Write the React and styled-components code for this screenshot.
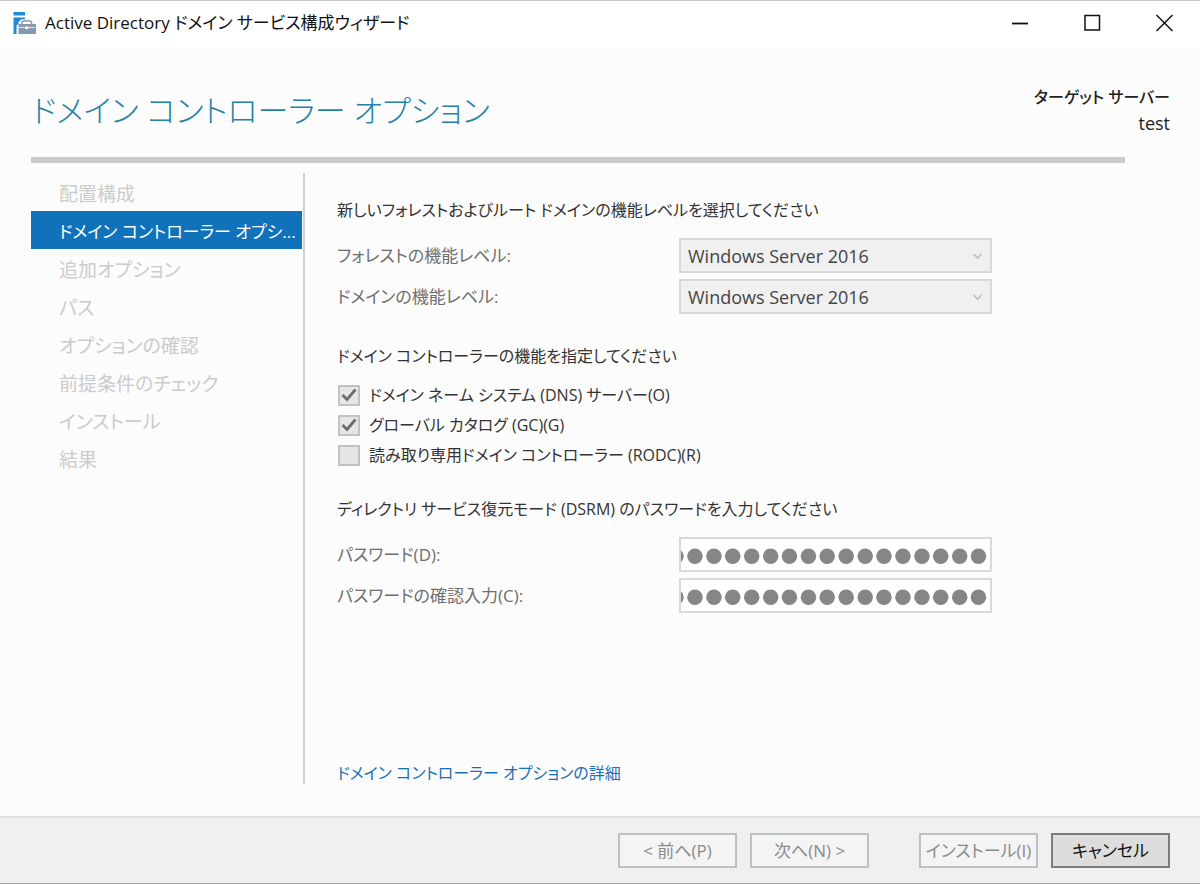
import React, { useState } from 'react';
import styled, { createGlobalStyle } from 'styled-components';

const GlobalStyle = createGlobalStyle`
  * {
    box-sizing: border-box;
  }

  body {
    margin: 0;
    background: #fcfcfc;
    color: #333;
    font-family: 'Open Sans', 'Noto Sans CJK JP', sans-serif;
    font-size: 16px;
    line-height: 26px;
    font-feature-settings: 'palt';
  }

  button, input, select {
    font: inherit;
    font-feature-settings: inherit;
    margin: 0;
  }
`;

const Window = styled.div`
  display: flex;
  flex-direction: column;
  min-height: 100vh;
  border-top: 1px solid #c8c8c8;
  border-bottom: 1px solid #a8a8a8;
`;

const TitleBar = styled.header`
  display: flex;
  align-items: center;
  height: 47px;
  padding: 0 0 4px 12px;
  background: #fff;
  color: #111;
`;

const TitleText = styled.span`
  flex: 1;
  margin-left: 9px;
  font-size: 17px;
  white-space: nowrap;
`;

const CaptionButton = styled.button`
  display: flex;
  align-items: center;
  justify-content: center;
  width: 72px;
  height: 40px;
  padding: 0;
  border: none;
  background: transparent;
  color: #111;
`;

const Header = styled.div`
  display: flex;
  justify-content: space-between;
  align-items: center;
  height: 109px;
  padding: 14px 30px 0 32px;
`;

const PageTitle = styled.h1`
  margin: 0;
  color: #2482a4;
  font-size: 31px;
  line-height: 48px;
  font-weight: 300;
`;

const Target = styled.div`
  color: #222;
  font-weight: 500;
  text-align: right;
`;

const ServerName = styled.div`
  font-size: 18px;
`;

const Rule = styled.div`
  height: 6px;
  margin: 0 75px 0 31px;
  background: #cacaca;
`;

const Body = styled.div`
  display: flex;
  flex: 1;
  padding: 10px 30px 32px 31px;
`;

const Sidebar = styled.nav`
  width: 274px;
  padding-right: 1px;
  border-right: 2px solid #d0d0d0;
`;

const Step = styled.div`
  height: 38px;
  padding: 4px 4px 0 28px;
  background: ${({ $active }) => ($active ? '#1072ba' : 'transparent')};
  color: ${({ $active }) => ($active ? '#fff' : '#cbcbcb')};
  font-size: ${({ $active }) => ($active ? '17px' : '19px')};
  line-height: 34px;
  white-space: nowrap;
`;

const Content = styled.main`
  display: flex;
  flex: 1;
  flex-direction: column;
  align-items: flex-start;
  padding: 24px 0 0 32px;
`;

const Section = styled.section`
  width: 100%;
  max-width: 655px;
  margin-bottom: 23px;
`;

const SectionTitle = styled.h2`
  margin: 0 0 11px;
  font-size: inherit;
  font-weight: 400;
`;

const FieldList = styled.div`
  padding-top: 4px;
`;

const CheckList = styled.div`
  padding-bottom: 3px;
`;

const Field = styled.div`
  display: flex;
  align-items: center;
  justify-content: space-between;
  margin-bottom: 6px;
`;

const FieldLabel = styled.label`
  color: #6f6f6f;
  font-size: 17px;
`;

const SelectBox = styled.div`
  display: grid;
  width: 313px;
  align-items: center;

  > * {
    grid-area: 1 / 1;
  }

  svg {
    justify-self: end;
    margin-right: 9px;
    pointer-events: none;
  }
`;

const Select = styled.select`
  width: 100%;
  height: 35px;
  padding: 0 28px 0 7px;
  border: 2px solid #d9d9d9;
  border-radius: 0;
  background: #f0f0f0;
  color: #444;
  font-size: 18px;
  opacity: 1;
  appearance: none;
`;

const PasswordInput = styled.input`
  width: 313px;
  height: 35px;
  padding: 0 2px 0 0;
  border: 2px solid #d7dadc;
  background: #fff;
  color: #868686;
  font-family: 'Liberation Sans', sans-serif;
  font-size: 54px;
  font-weight: 700;
  line-height: 31px;
  /* keeps the end of a long value in view */
  direction: rtl;
`;

const CheckRow = styled.label`
  display: flex;
  align-items: center;
  gap: 9px;
  height: 30px;
  padding-left: 1px;
`;

const CheckBox = styled.span`
  display: grid;
  place-items: center;

  > * {
    grid-area: 1 / 1;
  }

  svg {
    pointer-events: none;
  }
`;

const CheckInput = styled.input`
  width: 22px;
  height: 21px;
  border: 2px solid #c2c2c2;
  background: #e6e6e6;
  appearance: none;
`;

const MoreLink = styled.a`
  margin-top: auto;
  margin-bottom: -2px;
  color: #1a70b8;
  text-decoration: none;
`;

const Footer = styled.footer`
  display: flex;
  justify-content: flex-end;
  gap: 13px;
  padding: 15px 30px;
  border-top: 2px solid #dfdfdf;
  background: #f0f0f0;
`;

const FooterButton = styled.button`
  width: 119px;
  height: 35px;
  margin-left: ${({ $apart }) => ($apart ? '37px' : 0)};
  padding: 0;
  border: 2px solid #bcc1c4;
  background: #f4f4f4;
  color: #8b8b8b;
  font-size: 17px;
  white-space: nowrap;

  &:enabled {
    border-color: #7c7c7c;
    background: #dddddd;
    color: #111;
  }
`;

const steps = [
  '配置構成',
  'ドメイン コントローラー オプシ...',
  '追加オプション',
  'パス',
  'オプションの確認',
  '前提条件のチェック',
  'インストール',
  '結果',
];

const levels = [
  { id: 'forest', label: 'フォレストの機能レベル:' },
  { id: 'domain', label: 'ドメインの機能レベル:' },
];

const features = [
  { id: 'dns', label: 'ドメイン ネーム システム (DNS) サーバー(O)', checked: true },
  { id: 'gc', label: 'グローバル カタログ (GC)(G)', checked: true },
  { id: 'rodc', label: '読み取り専用ドメイン コントローラー (RODC)(R)', checked: false },
];

const AppIcon = () => (
  <svg width="24" height="24" viewBox="0 0 24 24" aria-hidden="true">
    <path d="M1.500 1H13v3.500H1.500zM1.500 6.500H13v1.700H9.500L6.500 11v2l-2 1.500v8.500h-3z" fill="#1f8ad8" />
    <path d="M10 13.500v-2q0-1.500 1.500-1.500h6.500q1.500 0 1.500 1.500v2" fill="none" stroke="#8799ae" strokeWidth="1.500" />
    <path d="M6.500 13H24v10H6.500z" fill="#8799ae" />
    <path d="M7 16.500h5.500M17 16.500h6.500" stroke="#dfe5ec" strokeWidth="1" />
    <path d="M13 15.500h3.500v2.500H13z" fill="#fff" />
  </svg>
);

const Check = () => (
  <svg width="18" height="16" viewBox="0 0 18 16" aria-hidden="true">
    <path d="M2.500 8l4.500 4.500L15.500 2.500" fill="none" stroke="#6d6d6d" strokeWidth="2.800" />
  </svg>
);

const App = () => {
  const [passwords, setPasswords] = useState({ password: 'x'.repeat(20), confirm: 'x'.repeat(20) });

  const handleChange = (e) => {
    setPasswords({ ...passwords, [e.target.id]: e.target.value });
  };

  return (
    <>
      <GlobalStyle />
      <Window>
        <TitleBar>
          <AppIcon />
          <TitleText>Active Directory ドメイン サービス構成ウィザード</TitleText>
          <CaptionButton aria-label="最小化">
            <svg width="18" height="18" viewBox="0 0 18 18">
              <path d="M1 9.500h16" stroke="currentColor" strokeWidth="1.800" />
            </svg>
          </CaptionButton>
          <CaptionButton aria-label="最大化">
            <svg width="18" height="18" viewBox="0 0 18 18">
              <path d="M2 1.500h14.500V16H2z" fill="none" stroke="currentColor" strokeWidth="1.500" />
            </svg>
          </CaptionButton>
          <CaptionButton aria-label="閉じる">
            <svg width="18" height="18" viewBox="0 0 18 18">
              <path d="M1.500 1l16 16M17.500 1L1.500 17" stroke="currentColor" strokeWidth="1.500" />
            </svg>
          </CaptionButton>
        </TitleBar>

        <Header>
          <PageTitle>ドメイン コントローラー オプション</PageTitle>
          <Target>
            <div>ターゲット サーバー</div>
            <ServerName>test</ServerName>
          </Target>
        </Header>
        <Rule />

        <Body>
          <Sidebar>
            {steps.map((step, i) => (
              <Step key={step} $active={i === 1}>{step}</Step>
            ))}
          </Sidebar>

          <Content>
            <Section>
              <SectionTitle>新しいフォレストおよびルート ドメインの機能レベルを選択してください</SectionTitle>
              <FieldList>
                {levels.map(({ id, label }) => (
                  <Field key={id}>
                    <FieldLabel htmlFor={id}>{label}</FieldLabel>
                    <SelectBox>
                      <Select id={id} disabled>
                        <option>Windows Server 2016</option>
                      </Select>
                      <svg width="11" height="8" viewBox="0 0 11 8" aria-hidden="true">
                        <path d="M1.500 2l4 4 4-4" fill="none" stroke="#bfbfbf" strokeWidth="1.600" />
                      </svg>
                    </SelectBox>
                  </Field>
                ))}
              </FieldList>
            </Section>

            <Section>
              <SectionTitle>ドメイン コントローラーの機能を指定してください</SectionTitle>
              <CheckList>
                {features.map(({ id, label, checked }) => (
                  <CheckRow key={id}>
                    <CheckBox>
                      <CheckInput type="checkbox" defaultChecked={checked} disabled />
                      {checked && <Check />}
                    </CheckBox>
                    {label}
                  </CheckRow>
                ))}
              </CheckList>
            </Section>

            <Section>
              <SectionTitle>ディレクトリ サービス復元モード (DSRM) のパスワードを入力してください</SectionTitle>
              <FieldList>
                <Field>
                  <FieldLabel htmlFor="password">パスワード(D):</FieldLabel>
                  <PasswordInput id="password" type="password" value={passwords.password} onChange={handleChange} />
                </Field>
                <Field>
                  <FieldLabel htmlFor="confirm">パスワードの確認入力(C):</FieldLabel>
                  <PasswordInput id="confirm" type="password" value={passwords.confirm} onChange={handleChange} />
                </Field>
              </FieldList>
            </Section>

            <MoreLink href="#more">ドメイン コントローラー オプションの詳細</MoreLink>
          </Content>
        </Body>

        <Footer>
          <FooterButton disabled>&lt; 前へ(P)</FooterButton>
          <FooterButton disabled>次へ(N) &gt;</FooterButton>
          <FooterButton disabled $apart>インストール(I)</FooterButton>
          <FooterButton>キャンセル</FooterButton>
        </Footer>
      </Window>
    </>
  );
};

export default App;
